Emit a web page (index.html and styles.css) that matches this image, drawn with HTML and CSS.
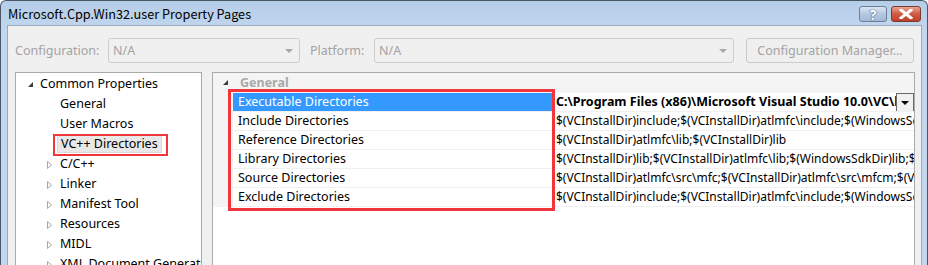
FILE: index.html
```html
<!doctype html>
<html lang="en">
<head>
  <meta charset="UTF-8" />
  <title>Microsoft.Cpp.Win32.user Property Pages</title>
  <link rel="stylesheet" href="styles.css">
</head>
<body>
  <div class="window">
    <header class="titlebar">
      <span class="title">Microsoft.Cpp.Win32.user Property Pages</span>
      <div class="caption-buttons">
        <span class="cap-btn help">?</span>
        <span class="cap-btn close">
          <svg width="14" height="10" viewBox="0 0 14 10">
            <path d="M2 1 L12 9 M12 1 L2 9" stroke="#fff" stroke-width="3" stroke-linecap="square"/>
          </svg>
        </span>
      </div>
    </header>

    <main class="client">
      <div class="config-row">
        <label class="lbl lbl-config">Configuration:</label>
        <div class="combo combo-config"><span>N/A</span><i class="combo-arrow"></i></div>
        <label class="lbl lbl-platform">Platform:</label>
        <div class="combo combo-platform"><span>N/A</span><i class="combo-arrow"></i></div>
        <button class="btn-manager">Configuration Manager...</button>
      </div>

      <div class="panes">
        <ul class="tree">
          <li class="node root"><span class="exp open"></span>Common Properties</li>
          <li class="node child">General</li>
          <li class="node child">User Macros</li>
          <li class="node child selected"><span class="sel-text">VC++ Directories</span><span class="mark"></span></li>
          <li class="node child"><svg class="closed" width="7" height="10" viewBox="0 0 7 10"><path d="M1.5 1.5 L5.5 5 L1.5 8.5 Z" fill="none" stroke="#a6a6a6"/></svg>C/C++</li>
          <li class="node child"><svg class="closed" width="7" height="10" viewBox="0 0 7 10"><path d="M1.5 1.5 L5.5 5 L1.5 8.5 Z" fill="none" stroke="#a6a6a6"/></svg>Linker</li>
          <li class="node child"><svg class="closed" width="7" height="10" viewBox="0 0 7 10"><path d="M1.5 1.5 L5.5 5 L1.5 8.5 Z" fill="none" stroke="#a6a6a6"/></svg>Manifest Tool</li>
          <li class="node child"><svg class="closed" width="7" height="10" viewBox="0 0 7 10"><path d="M1.5 1.5 L5.5 5 L1.5 8.5 Z" fill="none" stroke="#a6a6a6"/></svg>Resources</li>
          <li class="node child"><svg class="closed" width="7" height="10" viewBox="0 0 7 10"><path d="M1.5 1.5 L5.5 5 L1.5 8.5 Z" fill="none" stroke="#a6a6a6"/></svg>MIDL</li>
          <li class="node child"><svg class="closed" width="7" height="10" viewBox="0 0 7 10"><path d="M1.5 1.5 L5.5 5 L1.5 8.5 Z" fill="none" stroke="#a6a6a6"/></svg>XML Document Generator</li>
        </ul>

        <section class="grid">
          <div class="category"><span class="exp open"></span>General</div>
          <div class="rows">
            <div class="row selected">
              <div class="name">Executable Directories</div>
              <div class="value bold">C:\Program Files (x86)\Microsoft Visual Studio 10.0\VC\bin;$(WindowsSdkDir)bin<span class="drop"><i></i></span></div>
            </div>
            <div class="row">
              <div class="name">Include Directories</div>
              <div class="value">$(VCInstallDir)include;$(VCInstallDir)atlmfc\include;$(WindowsSdkDir)include;$(FrameworkSDKDir)\include</div>
            </div>
            <div class="row">
              <div class="name">Reference Directories</div>
              <div class="value">$(VCInstallDir)atlmfc\lib;$(VCInstallDir)lib</div>
            </div>
            <div class="row">
              <div class="name">Library Directories</div>
              <div class="value">$(VCInstallDir)lib;$(VCInstallDir)atlmfc\lib;$(WindowsSdkDir)lib;$(FrameworkSDKDir)\lib</div>
            </div>
            <div class="row">
              <div class="name">Source Directories</div>
              <div class="value">$(VCInstallDir)atlmfc\src\mfc;$(VCInstallDir)atlmfc\src\mfcm;$(VCInstallDir)atlmfc\src\atl</div>
            </div>
            <div class="row">
              <div class="name">Exclude Directories</div>
              <div class="value">$(VCInstallDir)include;$(VCInstallDir)atlmfc\include;$(WindowsSdkDir)include;$(FrameworkSDKDir)\include</div>
            </div>
            <span class="mark rows-mark"></span>
          </div>
        </section>
      </div>
    </main>
  </div>
</body>
</html>
```

FILE: styles.css
```css
* {
  margin: 0;
  padding: 0;
  box-sizing: border-box;
}

html, body {
  width: 928px;
  height: 265px;
  overflow: hidden;
  font-family: "Noto Sans", "Liberation Sans", sans-serif;
  font-size: 12px;
  color: #000;
  background: #fff;
}

.window {
  width: 928px;
  height: 265px;
  border: 1px solid #4a5766;
  border-bottom: none;
  border-radius: 6px 6px 0 0;
  background: linear-gradient(#b6cde8, #c2d7ee 30px);
  padding: 0 5px 0 6px;
  display: flex;
  flex-direction: column;
  overflow: hidden;
}

.titlebar {
  height: 24px;
  flex: none;
  display: flex;
  align-items: center;
  justify-content: space-between;
}

.title {
  font-family: "Noto Sans CJK SC", "Noto Sans", sans-serif;
  font-size: 12.7px;
  color: #000;
  padding-left: 1px;
  padding-top: 1px;
}

.caption-buttons {
  display: flex;
  gap: 4px;
  margin-top: 2px;
  margin-right: 1px;
}

.cap-btn {
  width: 28px;
  height: 16px;
  border: 1px solid #6d7f95;
  border-radius: 3px;
  display: flex;
  align-items: center;
  justify-content: center;
}

.help {
  background: linear-gradient(#dbe6f3, #b3c8e1 50%, #a3bbd8);
  color: #fff;
  font-weight: bold;
  font-size: 14px;
  text-shadow: 0 0 1px #33465c, 0 0 1px #33465c;
  width: 28px;
}

.close {
  width: 30px;
  border-color: #7a3a30;
  background: linear-gradient(#e8a493, #cf5a43 50%, #c0412b);
}

.client {
  flex: 1;
  background: #f0f0f0;
  border-left: 1px solid #9aabbf;
  border-right: 1px solid #9aabbf;
  border-top: 1px solid #9aabbf;
  padding: 12px 0 0 7px;
}

.config-row {
  display: flex;
  align-items: center;
  height: 25px;
  color: #a3a3a3;
  font-size: 12.5px;
}

.lbl-config {
  width: 93px;
}

.lbl-platform {
  width: 64px;
  margin-left: 10px;
}

.combo {
  height: 25px;
  border: 1px solid #cdcdcd;
  border-radius: 3px;
  display: flex;
  align-items: center;
  justify-content: space-between;
  padding: 0 6px 0 4px;
}

.combo-config {
  width: 192px;
}

.combo-platform {
  width: 360px;
}

.combo-arrow {
  width: 0;
  height: 0;
  border-left: 4px solid transparent;
  border-right: 4px solid transparent;
  border-top: 4px solid #a8a8a8;
}

.btn-manager {
  margin-left: 12px;
  width: 168px;
  height: 25px;
  border: 1px solid #cacaca;
  border-radius: 3px;
  background: #efefef;
  color: #a3a3a3;
  font-family: inherit;
  font-size: 12.5px;
}

.panes {
  display: flex;
  margin-top: 9px;
  gap: 10px;
  height: 200px;
}

.tree {
  list-style: none;
  width: 187px;
  background: #fff;
  border: 1px solid #aaaaaa;
  padding-top: 1px;
  overflow: hidden;
}

.node {
  position: relative;
  height: 20px;
  line-height: 20px;
  font-size: 12.5px;
  white-space: nowrap;
  overflow: hidden;
}

.root {
  padding-left: 25px;
}

.child {
  padding-left: 44px;
}

.exp {
  display: inline-block;
  width: 0;
  height: 0;
  vertical-align: middle;
}

.root .exp {
  margin-left: -13px;
  margin-right: 7px;
}

.exp.open {
  border-left: 5px solid transparent;
  border-bottom: 5px solid #3c3c3c;
  margin-top: -1px;
}

.closed {
  position: absolute;
  left: 30px;
  top: 6px;
}

.node.selected {
  overflow: visible;
}

.sel-text {
  display: inline-block;
  line-height: 17px;
  padding: 0 3px;
  margin-left: -3px;
  background: #e8e8e8;
  border: 1px solid #dadada;
}

.mark {
  position: absolute;
  border: 2px solid #f0363a;
  pointer-events: none;
}

.selected .mark {
  left: 37px;
  top: 0;
  width: 115px;
  height: 22px;
}

.grid {
  flex: 1;
  margin-right: 6px;
  background: #fff;
  border: 1px solid #aaaaaa;
  overflow: hidden;
}

.category {
  height: 20px;
  line-height: 20px;
  background: #f4f4f4;
  color: #a9a9a9;
  font-weight: bold;
  font-size: 12.5px;
  padding-left: 10px;
}

.category .exp {
  margin-right: 12px;
  margin-top: -2px;
}

.rows {
  position: relative;
  border-left: 20px solid #f4f4f4;
}

.row {
  display: flex;
  height: 19px;
  border-bottom: 1px solid #f0f0f0;
}

.name {
  width: 320px;
  flex: none;
  padding-left: 5px;
  line-height: 18px;
  font-size: 12.5px;
  border-right: 1px solid #f0f0f0;
}

.row.selected .name {
  background: #3399ff;
  color: #fff;
}

.value {
  position: relative;
  flex: 1;
  min-width: 0;
  padding-left: 3px;
  line-height: 18px;
  white-space: nowrap;
  overflow: hidden;
  font-size: 12px;
}

.value.bold {
  font-weight: bold;
  font-size: 12.5px;
}

.drop {
  position: absolute;
  right: 0;
  top: 0;
  width: 18px;
  height: 19px;
  background: #f0f0f0;
  border: 1px solid #6b6b6b;
  display: flex;
  align-items: center;
  justify-content: center;
}

.drop i {
  width: 0;
  height: 0;
  border-left: 4px solid transparent;
  border-right: 4px solid transparent;
  border-top: 4px solid #000;
}

.rows-mark {
  left: -5px;
  top: -4px;
  width: 327px;
  height: 122px;
  border-width: 3px;
}
```
